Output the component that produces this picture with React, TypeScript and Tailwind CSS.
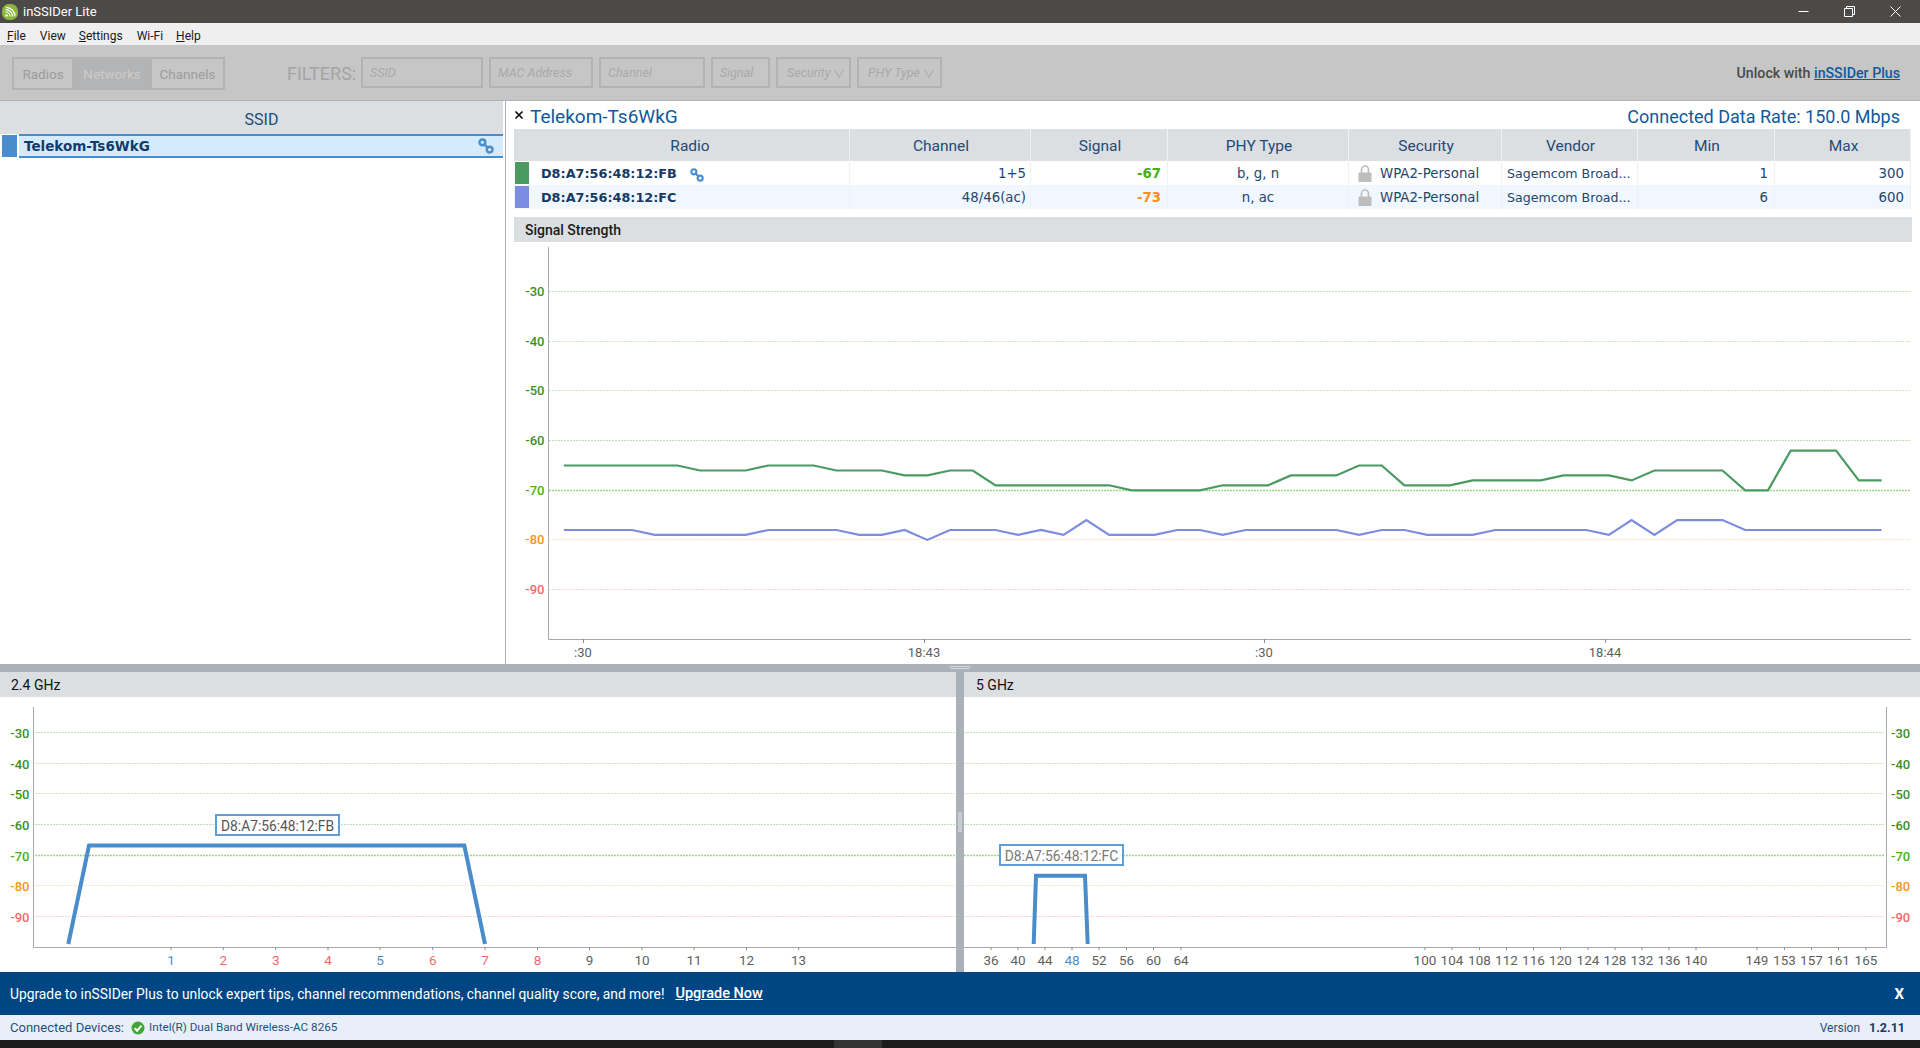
import React from 'react';
import { X } from 'lucide-react';

const seg = "font-['Roboto',sans-serif]";
const ver = "font-['DejaVu_Sans',sans-serif]";

// signal samples, one every 22.72px on the time axis
const greenSeries = [-65,-65,-65,-65,-65,-65,-66,-66,-66,-65,-65,-65,-66,-66,-66,-67,-67,-66,-66,-69,-69,-69,-69,-69,-69,-70,-70,-70,-70,-69,-69,-69,-67,-67,-67,-65,-65,-69,-69,-69,-68,-68,-68,-68,-67,-67,-67,-68,-66,-66,-66,-66,-70,-70,-62,-62,-62,-68,-68];
const purpleSeries = [-78,-78,-78,-78,-79,-79,-79,-79,-79,-78,-78,-78,-78,-79,-79,-78,-80,-78,-78,-78,-79,-78,-79,-76,-79,-79,-79,-78,-78,-79,-78,-78,-78,-78,-78,-79,-78,-78,-79,-79,-79,-78,-78,-78,-78,-78,-79,-76,-79,-76,-76,-76,-78,-78,-78,-78,-78,-78,-78];

const levels = [
  { v: -30, text: '#3f8f1f', line: '#c4e2b4', w: 1 },
  { v: -40, text: '#3f8f1f', line: '#cfe8c2', w: 1 },
  { v: -50, text: '#3f8f1f', line: '#cfe8c2', w: 1 },
  { v: -60, text: '#3f8f1f', line: '#bfe0ae', w: 1 },
  { v: -70, text: '#47b010', line: '#9bd97c', w: 1.5 },
  { v: -80, text: '#f79516', line: '#fde3c5', w: 1 },
  { v: -90, text: '#f26a6a', line: '#fbd2d2', w: 1 },
];

const toPoints = (series: number[]) =>
  series.map((v, i) => `${(563.8 + i * 22.72).toFixed(1)},${(291.9 + (-30 - v) * 4.96).toFixed(1)}`).join(' ');

const LinkIcon = ({ className }: { className: string }) => (
  <svg viewBox="0 0 16 16" className={className} fill="none" stroke="#4a8dcc" strokeWidth="2.4">
    <circle cx="4.4" cy="4.4" r="2.9" />
    <circle cx="11.6" cy="11.6" r="2.9" />
    <path d="M5.5 5.5 L10.5 10.5" />
  </svg>
);

const LockIcon = () => (
  <svg viewBox="0 0 14 17" className="w-[14px] h-[17px] shrink-0">
    <path d="M3.5 8 V4.5 a3.5 3.5 0 0 1 7 0 V8" fill="none" stroke="#bdbdc0" strokeWidth="1.6" />
    <rect x="0.5" y="7.5" width="13" height="9.5" rx="1" fill="#bdbdc0" />
  </svg>
);

const Logo = () => (
  <svg viewBox="0 0 16 16" className="w-4 h-4">
    <rect width="16" height="16" rx="7" fill="#8db63c" />
    <circle cx="4.6" cy="11.4" r="1.2" fill="#fff" />
    <path d="M3.5 8 a4.5 4.5 0 0 1 4.5 4.5 M3.5 5.6 a7 7 0 0 1 7 7 M4 3.3 a9.2 9.2 0 0 1 9 9" fill="none" stroke="#fff" strokeWidth="1.2" />
  </svg>
);

const CheckIcon = () => (
  <svg viewBox="0 0 14 14" className="w-[14px] h-[14px] shrink-0">
    <circle cx="7" cy="7" r="6.5" fill="#3fa535" />
    <path d="M3.6 7.2 L6.1 9.8 L10.4 4.6" fill="none" stroke="#fff" strokeWidth="2" />
  </svg>
);

const TitleBar = () => (
  <div className="h-[23px] bg-[#4c4a48] flex items-center shrink-0">
    <div className="ml-[2px] mr-[5px]"><Logo /></div>
    <span className={`${seg} text-[13px] text-white mt-[1px]`}>inSSIDer Lite</span>
    <div className="ml-auto flex items-center mr-[2px]">
      <div className="w-[46px] flex justify-center">
        <svg width="11" height="11" viewBox="0 0 11 11"><path d="M0.5 5.5 H10.5" stroke="#fff" /></svg>
      </div>
      <div className="w-[46px] flex justify-center">
        <svg width="11" height="11" viewBox="0 0 11 11" fill="none" stroke="#fff"><path d="M0.5 2.5 H8.5 V10.5 H0.5 Z M2.5 2.5 V0.5 H10.5 V8.5 H8.5" /></svg>
      </div>
      <div className="w-[46px] flex justify-center">
        <svg width="11" height="11" viewBox="0 0 11 11" stroke="#fff"><path d="M0.5 0.5 L10.5 10.5 M10.5 0.5 L0.5 10.5" /></svg>
      </div>
    </div>
  </div>
);

const MenuBar = () => (
  <div className={`${seg} h-[22px] bg-[#efefef] flex items-center shrink-0 text-[12px] text-[#1a1a1a] pt-[3px]`}>
    <span className="ml-[7px]"><u>F</u>ile</span>
    <span className="ml-[14px]">View</span>
    <span className="ml-[13px]"><u>S</u>ettings</span>
    <span className="ml-[14px]">Wi-Fi</span>
    <span className="ml-[13px]"><u>H</u>elp</span>
  </div>
);

const tabBase = `${seg} h-[33px] border-2 border-[#b3b3b3] flex items-center justify-center text-[13.5px] pt-[1px]`;
const filterBase = 'h-[31px] border-2 border-[#b3b3b3] flex items-center pt-[2px]';

const ToolBar = () => (
  <div className={`${seg} h-[56px] bg-[#c6c6c6] border-b border-[#aab1b8] flex items-start pt-[12px] shrink-0`}>
    <div className="flex ml-[12px]">
      <div className={`${tabBase} w-[62px] text-[#9d9d9d]`}>Radios</div>
      <div className={`${tabBase} w-[78px] -ml-px bg-[#b3b4b5] text-[#cbcbcb]`}>Networks</div>
      <div className={`${tabBase} w-[75px] -ml-px text-[#9d9d9d]`}>Channels</div>
    </div>
    <span className="ml-[62px] mt-[3px] w-[74px] text-[18px] leading-[28px] text-[#a4a4a4]">FILTERS:</span>
    <div className="flex gap-[6px] text-[12.5px] italic text-[#a9a9a9]">
      <div className={`${filterBase} w-[122px] pl-[7px]`}>SSID</div>
      <div className={`${filterBase} w-[104px] pl-[7px]`}>MAC Address</div>
      <div className={`${filterBase} w-[106px] pl-[7px]`}>Channel</div>
      <div className={`${filterBase} w-[59px] pl-[7px]`}>Signal</div>
      <div className={`${filterBase} w-[75px] pl-[9px] gap-[4px]`}>
        Security
        <svg width="10" height="9" viewBox="0 0 10 9" fill="none" stroke="#a9a9a9"><path d="M0.5 0.5 L5 8.5 L9.5 0.5" /></svg>
      </div>
      <div className={`${filterBase} w-[85px] pl-[9px] gap-[4px]`}>
        PHY Type
        <svg width="10" height="9" viewBox="0 0 10 9" fill="none" stroke="#a9a9a9"><path d="M0.5 0.5 L5 8.5 L9.5 0.5" /></svg>
      </div>
    </div>
    <div className="ml-auto mr-[20px] mt-[6px] text-[14.2px] font-medium text-[#4a4a4a]">
      Unlock with <span className="text-[#0f5a9c] underline">inSSIDer Plus</span>
    </div>
  </div>
);

const SsidPanel = () => (
  <div className="w-[506px] shrink-0 border-r border-[#aab1b8] bg-white pr-[2px] flex flex-col">
    <div className={`${seg} h-[33px] shrink-0 bg-[#dcdfe2] pl-[20px] pt-[4px] flex items-center justify-center text-[16px] text-[#1f4a78]`}>SSID</div>
    <div className="h-[24px] flex items-stretch">
      <div className="w-[15px] ml-[2px] my-[1px] bg-[#4a8dcc]" />
      <div className="ml-[2px] flex-1 bg-[#d4eafd] border-y-2 border-[#4a8dcc] flex items-center pl-[5px] pr-[9px]">
        <span className={`${ver} font-bold text-[13.5px] text-[#123c69]`}>Telekom-Ts6WkG</span>
        <LinkIcon className="ml-auto w-4 h-4" />
      </div>
    </div>
  </div>
);

const columnGrid = 'grid grid-cols-[336px_181px_137px_181px_153px_136px_137px_136px]';
const headerCell = `${seg} flex items-center justify-center text-[15.5px] text-[#1f4a78] border-r border-[#f0f1f3] pt-[3px]`;
const cell = `${ver} flex items-center text-[13.3px] text-[#24466e] border-r border-[#eef0f2] px-[5px] pt-[1px]`;

const rows = [
  { mac: 'D8:A7:56:48:12:FB', color: 'bg-[#4a9a62]', link: true, channel: '1+5', signal: '-67', signalColor: '!text-[#47b010]', phy: 'b, g, n', min: '1', max: '300', bg: 'bg-white' },
  { mac: 'D8:A7:56:48:12:FC', color: 'bg-[#7d8ce0]', link: false, channel: '48/46(ac)', signal: '-73', signalColor: '!text-[#f7901e]', phy: 'n, ac', min: '6', max: '600', bg: 'bg-[#f0f7fe]' },
];

const RadioTable = () => (
  <div className="w-[1397px] ml-[8px]">
    <div className={`${columnGrid} h-[32px] bg-[#dcdfe2]`}>
      {['Radio', 'Channel', 'Signal', 'PHY Type', 'Security', 'Vendor', 'Min', 'Max'].map((h, i) => (
        <div key={h} className={`${headerCell} ${i === 0 ? 'pl-[17px]' : 'pl-[2px]'}`}>{h}</div>
      ))}
    </div>
    {rows.map((r) => (
      <div key={r.mac} className={`${columnGrid} h-[24px] ${r.bg}`}>
        <div className={`${cell} !px-0 !pt-0`}>
          <div className={`w-[14px] h-[22px] ml-[1px] ${r.color}`} />
          <span className={`${ver} ml-[12px] font-bold text-[#163a64] text-[12.8px] mt-[1px]`}>{r.mac}</span>
          {r.link && <LinkIcon className="ml-[13px] w-[14px] h-[14px] mt-[3px]" />}
        </div>
        <div className={`${cell} justify-end !pr-[4px]`}>{r.channel}</div>
        <div className={`${cell} justify-end font-bold !pr-[6px] ${r.signalColor}`}>{r.signal}</div>
        <div className={`${cell} justify-center`}>{r.phy}</div>
        <div className={`${cell} !pl-[9px] gap-[8px] whitespace-nowrap`}><LockIcon />WPA2-Personal</div>
        <div className={`${cell} whitespace-nowrap !text-[12.6px] !pt-[2px]`}>Sagemcom Broad...</div>
        <div className={`${cell} justify-end !pr-[6px]`}>{r.min}</div>
        <div className={`${cell} justify-end !pr-[6px]`}>{r.max}</div>
      </div>
    ))}
  </div>
);

const SignalChart = () => {
  const ys = [291.5, 341.5, 390.5, 440.5, 490.5, 539.5, 589.5];
  const ticks = [
    { x: 583, label: ':30' },
    { x: 924, label: '18:43' },
    { x: 1264, label: ':30' },
    { x: 1605, label: '18:44' },
  ];
  return (
    <svg viewBox="506 242 1414 422" className={`${seg} w-[1414px] h-[422px] block`}>
      {levels.map((l, i) => (
        <g key={l.v}>
          <line x1="549" x2="1911" y1={ys[i]} y2={ys[i]} stroke={l.line} strokeWidth={l.w} strokeDasharray="2 1" />
          <text x="544.5" y={ys[i] + 4} textAnchor="end" fontSize="13" fontWeight="500" fill={l.text}>{l.v}</text>
        </g>
      ))}
      <path d="M548.5 247 V639.5 H1911" fill="none" stroke="#a8a8a8" />
      {ticks.map((t) => (
        <g key={t.x}>
          <line x1={t.x + 0.5} x2={t.x + 0.5} y1="639" y2="643" stroke="#8a8a8a" />
          <text x={t.x} y="657" textAnchor="middle" fontSize="13" fill="#5f5f5f">{t.label}</text>
        </g>
      ))}
      <polyline points={toPoints(greenSeries)} fill="none" stroke="#4a9a62" strokeWidth="2.2" />
      <polyline points={toPoints(purpleSeries)} fill="none" stroke="#7d8ce0" strokeWidth="2.2" />
    </svg>
  );
};

const DetailPanel = () => (
  <div className="flex-1 bg-white flex flex-col min-w-0">
    <div className={`${seg} h-[28px] flex items-center shrink-0 text-[#0f5a9c]`}>
      <X className="w-[12px] h-[12px] ml-[7px] text-[#111] -mt-[1px]" strokeWidth={3.5} />
      <span className="ml-[5px] text-[19px] mt-[4px]">Telekom-Ts6WkG</span>
      <span className="ml-auto mr-[20px] text-[18px] mt-[2px]">Connected Data Rate: 150.0 Mbps</span>
    </div>
    <RadioTable />
    <div className={`${seg} ml-[8px] mt-[8px] w-[1398px] h-[25px] shrink-0 bg-[#dcdfe2] flex items-center pl-[11px] text-[14px] font-medium text-[#1a1a1a] pt-[1px]`}>Signal Strength</div>
    <SignalChart />
  </div>
);

const bandYs = [732.5, 763.5, 793.5, 824.5, 855.5, 885.5, 916.5];

const chan24 = [
  { n: '1', x: 171, c: '#4a8dcc' }, { n: '2', x: 223.3, c: '#f26a6a' }, { n: '3', x: 275.7, c: '#f26a6a' },
  { n: '4', x: 328, c: '#f26a6a' }, { n: '5', x: 380, c: '#4a8dcc' }, { n: '6', x: 432.7, c: '#f26a6a' },
  { n: '7', x: 485, c: '#f26a6a' }, { n: '8', x: 537.5, c: '#f26a6a' }, { n: '9', x: 589.5, c: '#5f5f5f' },
  { n: '10', x: 642, c: '#5f5f5f' }, { n: '11', x: 694, c: '#5f5f5f' }, { n: '12', x: 746.5, c: '#5f5f5f' },
  { n: '13', x: 798.6, c: '#5f5f5f' },
];

const chan5: [string, number][] = [
  ['36', 991], ['40', 1018], ['44', 1045], ['48', 1072], ['52', 1099], ['56', 1126.5], ['60', 1153.5], ['64', 1181],
  ['100', 1425], ['104', 1452], ['108', 1479.5], ['112', 1506.5], ['116', 1533.5], ['120', 1560.5], ['124', 1588],
  ['128', 1615], ['132', 1642], ['136', 1669], ['140', 1696], ['149', 1757], ['153', 1784.5], ['157', 1811.5],
  ['161', 1838.5], ['165', 1866],
];

const Band24 = () => (
  <svg viewBox="0 697 956 275" className={`${seg} w-[956px] h-[275px] block`}>
    {levels.map((l, i) => (
      <g key={l.v}>
        <line x1="35" x2="956" y1={bandYs[i]} y2={bandYs[i]} stroke={l.line} strokeWidth={l.w} strokeDasharray="2 1" />
        <text x="29.5" y={bandYs[i] + 5} textAnchor="end" fontSize="13" fontWeight="500" fill={l.text}>{l.v}</text>
      </g>
    ))}
    <path d="M33.5 707 V947.5 H956" fill="none" stroke="#a8a8a8" />
    {chan24.map((c) => (
      <g key={c.n}>
        <line x1={c.x} x2={c.x} y1="947" y2="950" stroke="#8a8a8a" />
        <text x={c.x} y="965" textAnchor="middle" fontSize="13.5" fill={c.c}>{c.n}</text>
      </g>
    ))}
    <polyline points="68.3,944 89,845.5 464.3,845.5 485,944" fill="none" stroke="#4a8dcc" strokeWidth="4" />
    <rect x="216" y="815" width="123" height="20" fill="#fff" stroke="#5f9cd8" strokeWidth="2" />
    <text x="277.5" y="830.5" textAnchor="middle" fontSize="13.8" fill="#555">D8:A7:56:48:12:FB</text>
  </svg>
);

const Band5 = () => (
  <svg viewBox="964 697 956 275" className={`${seg} w-[956px] h-[275px] block`}>
    {levels.map((l, i) => (
      <g key={l.v}>
        <line x1="964" x2="1885" y1={bandYs[i]} y2={bandYs[i]} stroke={l.line} strokeWidth={l.w} strokeDasharray="2 1" />
        <text x="1891" y={bandYs[i] + 5} textAnchor="start" fontSize="13" fontWeight="500" fill={l.text}>{l.v}</text>
      </g>
    ))}
    <path d="M964 947.5 H1886.5 V707" fill="none" stroke="#a8a8a8" />
    {chan5.map(([n, x]) => (
      <g key={n}>
        <line x1={x} x2={x} y1="947" y2="950" stroke="#8a8a8a" />
        <text x={x} y="965" textAnchor="middle" fontSize="13.5" fill={n === '48' ? '#4a8dcc' : '#5f5f5f'}>{n}</text>
      </g>
    ))}
    <polyline points="1033.7,944 1036,875.7 1085,875.7 1087.7,944" fill="none" stroke="#4a8dcc" strokeWidth="4" />
    <rect x="1000" y="845" width="123" height="20" fill="#fff" stroke="#5f9cd8" strokeWidth="2" />
    <text x="1061.5" y="860.5" textAnchor="middle" fontSize="13.8" fill="#777">D8:A7:56:48:12:FC</text>
  </svg>
);

const BandHeader = ({ label, className }: { label: string; className: string }) => (
  <div className={`${seg} h-[25px] shrink-0 bg-[#dcdfe2] flex items-center text-[14px] text-[#111] pt-[1px] ${className}`}>{label}</div>
);

export default function App() {
  return (
    <div className="w-[1920px] h-[1048px] flex flex-col overflow-hidden bg-white">
      <TitleBar />
      <MenuBar />
      <ToolBar />
      <div className="h-[563px] flex shrink-0">
        <SsidPanel />
        <DetailPanel />
      </div>
      {/* splitter with its grip */}
      <div className="h-[8px] bg-[#aab1b8] shrink-0 flex justify-center pt-[2px]">
        <div className="w-[20px] h-[3px] border-y border-[#d5d9dd]" />
      </div>
      <div className="h-[300px] flex shrink-0">
        <div className="w-[956px] flex flex-col">
          <BandHeader label="2.4 GHz" className="pl-[11px]" />
          <Band24 />
        </div>
        <div className="w-[8px] bg-[#aab1b8] flex justify-center items-start pt-[140px]">
          <div className="w-[4px] h-[20px] bg-[#c8ccd2]" />
        </div>
        <div className="w-[956px] flex flex-col">
          <BandHeader label="5 GHz" className="pl-[12px]" />
          <Band5 />
        </div>
      </div>
      <div className={`${seg} h-[43px] shrink-0 bg-[#004685] flex items-center px-[10px] pt-[1px] text-[13.8px] text-white`}>
        <span>Upgrade to inSSIDer Plus to unlock expert tips, channel recommendations, channel quality score, and more!</span>
        <span className="ml-[11px] text-[14.5px] font-medium underline">Upgrade Now</span>
        <span className="ml-auto mr-[6px] text-[15px] font-bold">X</span>
      </div>
      <div className={`${seg} h-[25px] shrink-0 bg-[#e8eff9] flex items-center pl-[10px] pr-[15px] pt-[1px] text-[13px] text-[#1f4f82]`}>
        <span>Connected Devices:</span>
        <span className="ml-[7px]"><CheckIcon /></span>
        <span className="ml-[4px] text-[11.7px]">Intel(R) Dual Band Wireless-AC 8265</span>
        <span className="ml-auto text-[12px]">Version</span>
        <span className="ml-[9px] text-[12.5px] font-bold text-[#163a64]">1.2.11</span>
      </div>
      <div className="h-[8px] shrink-0 bg-[#1c1c1c] flex overflow-hidden">
        <div className="ml-[834px] w-[48px] bg-[#333333]" />
      </div>
    </div>
  );
}
